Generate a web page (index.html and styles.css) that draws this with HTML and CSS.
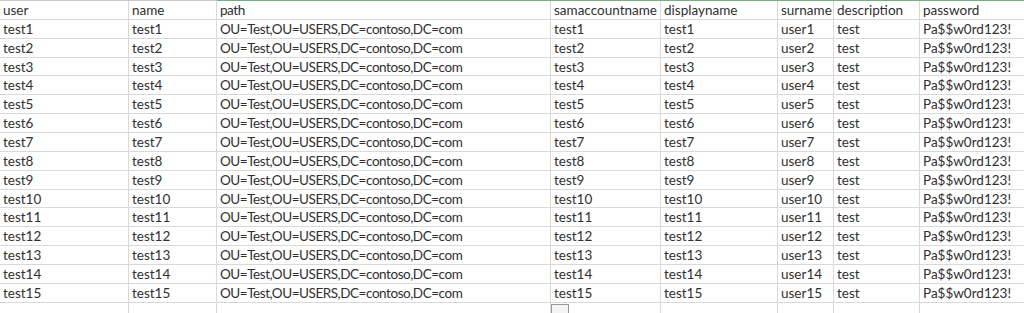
FILE: index.html
```html
<!DOCTYPE html>
<html>
<head>
<meta charset="utf-8">
<link rel="stylesheet" href="styles.css">
</head>
<body>
<div class="sheet">
  <div class="row head">
    <div class="c c1">user</div><div class="c c2">name</div><div class="c c3">path</div><div class="c c4">samaccountname</div><div class="c c5">displayname</div><div class="c c6">surname</div><div class="c c7">description</div><div class="c c8">password</div>
  </div>
  <div class="row"><div class="c c1">test1</div><div class="c c2">test1</div><div class="c c3">OU=Test,OU=USERS,DC=contoso,DC=com</div><div class="c c4">test1</div><div class="c c5">test1</div><div class="c c6">user1</div><div class="c c7">test</div><div class="c c8">Pa$$w0rd123!</div></div>
  <div class="row"><div class="c c1">test2</div><div class="c c2">test2</div><div class="c c3">OU=Test,OU=USERS,DC=contoso,DC=com</div><div class="c c4">test2</div><div class="c c5">test2</div><div class="c c6">user2</div><div class="c c7">test</div><div class="c c8">Pa$$w0rd123!</div></div>
  <div class="row"><div class="c c1">test3</div><div class="c c2">test3</div><div class="c c3">OU=Test,OU=USERS,DC=contoso,DC=com</div><div class="c c4">test3</div><div class="c c5">test3</div><div class="c c6">user3</div><div class="c c7">test</div><div class="c c8">Pa$$w0rd123!</div></div>
  <div class="row"><div class="c c1">test4</div><div class="c c2">test4</div><div class="c c3">OU=Test,OU=USERS,DC=contoso,DC=com</div><div class="c c4">test4</div><div class="c c5">test4</div><div class="c c6">user4</div><div class="c c7">test</div><div class="c c8">Pa$$w0rd123!</div></div>
  <div class="row"><div class="c c1">test5</div><div class="c c2">test5</div><div class="c c3">OU=Test,OU=USERS,DC=contoso,DC=com</div><div class="c c4">test5</div><div class="c c5">test5</div><div class="c c6">user5</div><div class="c c7">test</div><div class="c c8">Pa$$w0rd123!</div></div>
  <div class="row"><div class="c c1">test6</div><div class="c c2">test6</div><div class="c c3">OU=Test,OU=USERS,DC=contoso,DC=com</div><div class="c c4">test6</div><div class="c c5">test6</div><div class="c c6">user6</div><div class="c c7">test</div><div class="c c8">Pa$$w0rd123!</div></div>
  <div class="row"><div class="c c1">test7</div><div class="c c2">test7</div><div class="c c3">OU=Test,OU=USERS,DC=contoso,DC=com</div><div class="c c4">test7</div><div class="c c5">test7</div><div class="c c6">user7</div><div class="c c7">test</div><div class="c c8">Pa$$w0rd123!</div></div>
  <div class="row"><div class="c c1">test8</div><div class="c c2">test8</div><div class="c c3">OU=Test,OU=USERS,DC=contoso,DC=com</div><div class="c c4">test8</div><div class="c c5">test8</div><div class="c c6">user8</div><div class="c c7">test</div><div class="c c8">Pa$$w0rd123!</div></div>
  <div class="row"><div class="c c1">test9</div><div class="c c2">test9</div><div class="c c3">OU=Test,OU=USERS,DC=contoso,DC=com</div><div class="c c4">test9</div><div class="c c5">test9</div><div class="c c6">user9</div><div class="c c7">test</div><div class="c c8">Pa$$w0rd123!</div></div>
  <div class="row"><div class="c c1">test10</div><div class="c c2">test10</div><div class="c c3">OU=Test,OU=USERS,DC=contoso,DC=com</div><div class="c c4">test10</div><div class="c c5">test10</div><div class="c c6">user10</div><div class="c c7">test</div><div class="c c8">Pa$$w0rd123!</div></div>
  <div class="row"><div class="c c1">test11</div><div class="c c2">test11</div><div class="c c3">OU=Test,OU=USERS,DC=contoso,DC=com</div><div class="c c4">test11</div><div class="c c5">test11</div><div class="c c6">user11</div><div class="c c7">test</div><div class="c c8">Pa$$w0rd123!</div></div>
  <div class="row"><div class="c c1">test12</div><div class="c c2">test12</div><div class="c c3">OU=Test,OU=USERS,DC=contoso,DC=com</div><div class="c c4">test12</div><div class="c c5">test12</div><div class="c c6">user12</div><div class="c c7">test</div><div class="c c8">Pa$$w0rd123!</div></div>
  <div class="row"><div class="c c1">test13</div><div class="c c2">test13</div><div class="c c3">OU=Test,OU=USERS,DC=contoso,DC=com</div><div class="c c4">test13</div><div class="c c5">test13</div><div class="c c6">user13</div><div class="c c7">test</div><div class="c c8">Pa$$w0rd123!</div></div>
  <div class="row"><div class="c c1">test14</div><div class="c c2">test14</div><div class="c c3">OU=Test,OU=USERS,DC=contoso,DC=com</div><div class="c c4">test14</div><div class="c c5">test14</div><div class="c c6">user14</div><div class="c c7">test</div><div class="c c8">Pa$$w0rd123!</div></div>
  <div class="row"><div class="c c1">test15</div><div class="c c2">test15</div><div class="c c3">OU=Test,OU=USERS,DC=contoso,DC=com</div><div class="c c4">test15</div><div class="c c5">test15</div><div class="c c6">user15</div><div class="c c7">test</div><div class="c c8">Pa$$w0rd123!</div></div>
  <div class="row"><div class="c c1"></div><div class="c c2"></div><div class="c c3"></div><div class="c c4"><span class="paste"></span></div><div class="c c5"></div><div class="c c6"></div><div class="c c7"></div><div class="c c8"></div></div>
</div>
</body>
</html>
```
FILE: styles.css
```css
html, body {
  margin: 0;
  padding: 0;
  background: #ffffff;
  overflow: hidden;
}
.sheet {
  width: 1024px;
  font-family: Lato, "Liberation Sans", Arial, sans-serif;
  font-size: 13.5px;
  color: #303030;
  border-top: 1px solid #c8c8c8;
  position: relative;
}
.sheet::before {
  content: "";
  position: absolute;
  top: -1px;
  left: 217px;
  right: 0;
  height: 1px;
  background: #7fa98c;
}
.row {
  display: grid;
  grid-template-columns: 129px 88px 334px 110px 117px 56px 86px 104px;
  height: 18.86px;
}
.c {
  border-right: 1px solid #d9d9d9;
  border-bottom: 1px solid #d9d9d9;
  padding-left: 3px;
  line-height: 18px;
  white-space: nowrap;
  overflow: hidden;
  position: relative;
}
.c3 {
  letter-spacing: -0.45px;
}
.c8 {
  border-right: none;
}
.paste {
  position: absolute;
  left: 0;
  top: 1px;
  width: 16px;
  height: 14px;
  border: 1px solid #9a9a9a;
  background: #f4f4f4;
}
```
